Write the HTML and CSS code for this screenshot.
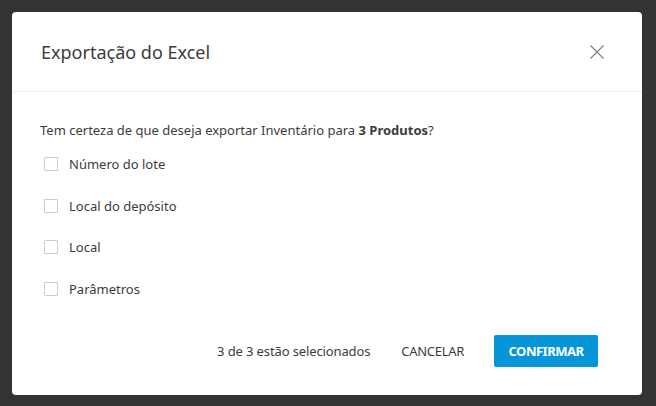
FILE: index.html
```html
<!DOCTYPE html>
<html lang="pt">
<head>
<meta charset="utf-8">
<link rel="stylesheet" href="styles.css">
</head>
<body>
<div class="dialog">
  <div class="header">
    <h1 class="title">Exportação do Excel</h1>
    <button class="close" aria-label="Fechar">
      <svg width="14" height="14" viewBox="0 0 14 14"><path d="M0.5 0.5 L13.5 13.5 M13.5 0.5 L0.5 13.5" stroke="#808080" stroke-width="1.2" fill="none"/></svg>
    </button>
  </div>
  <div class="content">
    <p class="question">Tem certeza de que deseja exportar Inventário para <b>3 Produtos</b>?</p>
    <ul class="options">
      <li class="option"><span class="box"></span><span class="label">Número do lote</span></li>
      <li class="option"><span class="box"></span><span class="label">Local do depósito</span></li>
      <li class="option"><span class="box"></span><span class="label">Local</span></li>
      <li class="option"><span class="box"></span><span class="label">Parâmetros</span></li>
    </ul>
  </div>
  <div class="footer">
    <span class="count">3 de 3 estão selecionados</span>
    <button class="btn-cancel">CANCELAR</button>
    <button class="btn-confirm">CONFIRMAR</button>
  </div>
</div>
</body>
</html>
```
FILE: styles.css
```css
html, body {
  margin: 0;
  padding: 0;
  background: #333333;
  height: 100%;
}
body {
  padding: 12px;
  box-sizing: border-box;
  font-family: "Noto Sans", "Open Sans", sans-serif;
  color: #3c3c3c;
}
.dialog {
  width: 630px;
  height: 383px;
  background: #ffffff;
  border-radius: 4px;
  display: flex;
  flex-direction: column;
}
.header {
  height: 80px;
  box-sizing: border-box;
  border-bottom: 1px solid #eeeeee;
  display: flex;
  align-items: center;
  justify-content: space-between;
  padding: 0 38px 0 29px;
}
.title {
  margin: 0;
  font-size: 18px;
  font-weight: 400;
  color: #3c3c3c;
}
.close {
  border: 0;
  background: none;
  padding: 0;
  width: 14px;
  height: 14px;
  display: flex;
}
.content {
  flex: 1;
  padding: 29px 28px 0 28px;
  font-size: 13px;
}
.question {
  margin: 0 0 4px 0;
  line-height: 18px;
}
.question b {
  font-weight: 700;
  color: #3c3c3c;
}
.options {
  list-style: none;
  margin: 0;
  padding: 0;
}
.option {
  display: flex;
  align-items: center;
  height: 41.7px;
  padding-left: 4px;
}
.box {
  width: 12px;
  height: 12px;
  border: 1px solid #cccccc;
  border-radius: 1px;
  margin-right: 11px;
}
.footer {
  display: flex;
  align-items: center;
  justify-content: flex-end;
  padding: 0 44px 28px 0;
  font-size: 13px;
}
.count {
  margin-right: 31px;
  letter-spacing: -0.12px;
}
.btn-cancel {
  border: 0;
  background: none;
  font: inherit;
  color: #3c3c3c;
  padding: 0;
  margin-right: 30px;
  letter-spacing: -0.3px;
}
.btn-confirm {
  border: 0;
  width: 104px;
  height: 32px;
  border-radius: 2px;
  background: #0696d7;
  color: #ffffff;
  font: inherit;
  font-weight: 700;
  letter-spacing: -0.5px;
}
```
